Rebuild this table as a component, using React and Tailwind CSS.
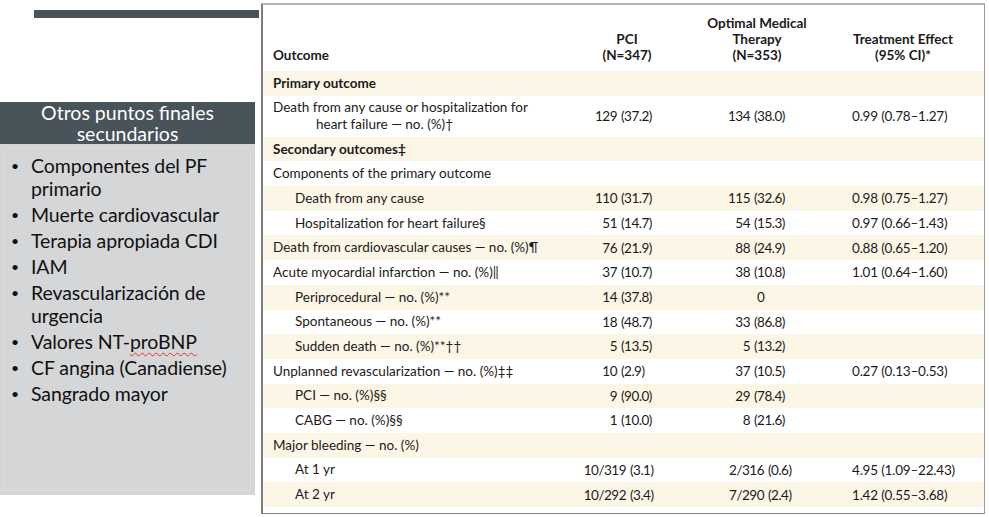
import React from "react";

const rows = [
  { label: "Primary outcome", bold: true, tint: true },
  {
    label: ["Death from any cause or hospitalization for", "heart failure — no. (%)†"],
    pci: ["129", "(37.2)"],
    omt: ["134", "(38.0)"],
    te: "0.99 (0.78–1.27)",
  },
  { label: "Secondary outcomes‡", bold: true, tint: true },
  { label: "Components of the primary outcome" },
  { label: "Death from any cause", indent: true, tint: true, pci: ["110", "(31.7)"], omt: ["115", "(32.6)"], te: "0.98 (0.75–1.27)" },
  { label: "Hospitalization for heart failure§", indent: true, pci: ["51", "(14.7)"], omt: ["54", "(15.3)"], te: "0.97 (0.66–1.43)" },
  { label: "Death from cardiovascular causes — no. (%)¶", tint: true, pci: ["76", "(21.9)"], omt: ["88", "(24.9)"], te: "0.88 (0.65–1.20)" },
  { label: "Acute myocardial infarction — no. (%)‖", pci: ["37", "(10.7)"], omt: ["38", "(10.8)"], te: "1.01 (0.64–1.60)" },
  { label: "Periprocedural — no. (%)**", indent: true, tint: true, pci: ["14", "(37.8)"], zero: true },
  { label: "Spontaneous — no. (%)**", indent: true, pci: ["18", "(48.7)"], omt: ["33", "(86.8)"] },
  { label: "Sudden death — no. (%)**††", indent: true, tint: true, pci: ["5", "(13.5)"], omt: ["5", "(13.2)"] },
  { label: "Unplanned revascularization — no. (%)‡‡", pci: ["10", "(2.9)"], omt: ["37", "(10.5)"], te: "0.27 (0.13–0.53)" },
  { label: "PCI — no. (%)§§", indent: true, tint: true, pci: ["9", "(90.0)"], omt: ["29", "(78.4)"] },
  { label: "CABG — no. (%)§§", indent: true, pci: ["1", "(10.0)"], omt: ["8", "(21.6)"] },
  { label: "Major bleeding — no. (%)", tint: true },
  { label: "At 1 yr", indent: true, wide: true, pci: ["10/319", "(3.1)"], omt: ["2/316", "(0.6)"], te: "4.95 (1.09–22.43)" },
  { label: "At 2 yr", indent: true, wide: true, tint: true, pci: ["10/292", "(3.4)"], omt: ["7/290", "(2.4)"], te: "1.42 (0.55–3.68)" },
];

function Split({ v, w }) {
  return (
    <div className="flex items-center whitespace-nowrap tracking-[-0.5px]">
      <span className="flex justify-end shrink-0" style={{ width: w }}>
        {v[0]}
      </span>
      <span className="pl-[4px]">{v[1]}</span>
    </div>
  );
}

function Row({ r }) {
  const two = Array.isArray(r.label);
  return (
    <div
      className={`grid grid-cols-[319px_80px_190px_132px] items-center ${two ? "h-[41px]" : "h-[24.7px]"} ${
        r.tint ? "bg-[#fcf6e6]" : "bg-white"
      }`}
    >
      <div className={`${r.indent ? "pl-[32px]" : "pl-[10px]"} ${r.bold ? "font-bold" : ""} whitespace-nowrap leading-[17px]`}>
        {two ? (
          <>
            <div>{r.label[0]}</div>
            <div className="pl-[43px]">{r.label[1]}</div>
          </>
        ) : (
          r.label
        )}
      </div>
      <div>{r.pci && <Split v={r.pci} w={r.wide ? 44 : 35} />}</div>
      <div>
        {r.omt && <Split v={r.omt} w={r.wide ? 102 : 88} />}
        {r.zero && <span className="pl-[95px]">0</span>}
      </div>
      <div className="whitespace-nowrap tracking-[-0.2px]">{r.te}</div>
    </div>
  );
}

export default function App() {
  return (
    <div className="w-[989px] h-[517px] bg-white flex overflow-hidden font-['Lato',sans-serif]">
      <div className="w-[261px] shrink-0 flex flex-col">
        <div className="mt-[10px] ml-[34px] w-[225px] h-[8px] bg-[#48535a]" />
        <div className="mt-[84px] w-[255px]">
          <div className="h-[42px] bg-[#48535a] text-white text-[19.5px] leading-[21px] text-center flex flex-col justify-center">
            <div>Otros puntos finales</div>
            <div>secundarios</div>
          </div>
          <div className="h-[351px] bg-[#d5d6d7] p-[4px]">
            <div className="h-full border border-[#dbdcdc] pt-[5px] text-[#111] text-[19.5px] leading-[23px]">
              <ul className="flex flex-col gap-[3px]">
                {[
                  "Componentes del PF primario",
                  "Muerte cardiovascular",
                  "Terapia apropiada CDI",
                  "IAM",
                  "Revascularización de urgencia",
                  "NTPRO",
                  "CF angina (Canadiense)",
                  "Sangrado mayor",
                ].map((t) => (
                  <li key={t} className="flex">
                    <span className="w-[26px] shrink-0 pl-[6px] text-[14px]">•</span>
                    <span className="w-[215px] tracking-[-0.1px]">
                      {t === "NTPRO" ? (
                        <>
                          Valores NT-
                          <span className="underline decoration-wavy decoration-[#e03030] decoration-1 underline-offset-[3px]">
                            proBNP
                          </span>
                        </>
                      ) : (
                        t
                      )}
                    </span>
                  </li>
                ))}
              </ul>
            </div>
          </div>
        </div>
      </div>
      <div className="mt-[3px] w-[724px] h-[511px] border-l-2 border-t-2 border-r border-b border-l-[#7d7d7d] border-t-[#b5b5b5] border-r-[#9a9a9a] border-b-[#808080] text-[#1c1a1a] text-[13.5px]">
        <div className="grid grid-cols-[319px_80px_190px_132px] h-[66px] items-end pb-[8px] font-bold leading-[16px]">
          <div className="pl-[10px]">Outcome</div>
          <div className="text-center pl-[10px]">
            <div>PCI</div>
            <div>(N=347)</div>
          </div>
          <div className="text-center">
            <div>Optimal Medical</div>
            <div>Therapy</div>
            <div>(N=353)</div>
          </div>
          <div className="w-[102px] text-center">
            <div>Treatment Effect</div>
            <div>(95% CI)*</div>
          </div>
        </div>
        {rows.map((r, i) => (
          <Row key={i} r={r} />
        ))}
      </div>
    </div>
  );
}
